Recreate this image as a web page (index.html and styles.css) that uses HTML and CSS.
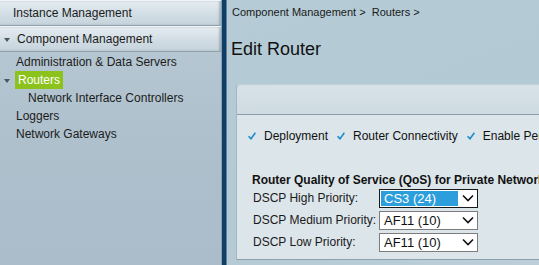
FILE: index.html
```html
<!DOCTYPE html>
<html lang="en">
<head>
  <meta charset="UTF-8" />
  <title>Edit Router</title>
  <link rel="stylesheet" href="styles.css">
</head>
<body>
  <div class="app">
    <aside class="sidebar">
      <div class="nav-bar">Instance Management</div>
      <div class="nav-bar open"><span class="caret"></span>Component Management</div>
      <ul class="nav-list">
        <li>Administration &amp; Data Servers</li>
        <li class="has-caret"><span class="caret"></span><span class="active">Routers</span></li>
        <li class="sub">Network Interface Controllers</li>
        <li>Loggers</li>
        <li>Network Gateways</li>
      </ul>
    </aside>
    <div class="divider"></div>

    <main class="content">
      <div class="breadcrumb">Component Management &gt;&nbsp; Routers &gt;</div>
      <h1>Edit Router</h1>

      <div class="panel">
        <div class="panel-head"></div>
        <div class="panel-body">
          <div class="steps">
            <span class="step"><svg class="tick" viewBox="0 0 8 8"><path d="M0.6 4.2 L3 6.8 L7.4 0.8" /></svg>Deployment</span>
            <span class="step"><svg class="tick" viewBox="0 0 8 8"><path d="M0.6 4.2 L3 6.8 L7.4 0.8" /></svg>Router Connectivity</span>
            <span class="step"><svg class="tick" viewBox="0 0 8 8"><path d="M0.6 4.2 L3 6.8 L7.4 0.8" /></svg>Enable Persistent</span>
          </div>

          <h2>Router Quality of Service (QoS) for Private Network</h2>
          <div class="form-row">
            <label>DSCP High Priority:</label>
            <div class="select focused"><span class="value">CS3 (24)</span><svg class="chev" viewBox="0 0 12 8"><path d="M1 1.5 L6 6.5 L11 1.5" /></svg></div>
          </div>
          <div class="form-row">
            <label>DSCP Medium Priority:</label>
            <div class="select"><span class="value">AF11 (10)</span><svg class="chev" viewBox="0 0 12 8"><path d="M1 1.5 L6 6.5 L11 1.5" /></svg></div>
          </div>
          <div class="form-row">
            <label>DSCP Low Priority:</label>
            <div class="select"><span class="value">AF11 (10)</span><svg class="chev" viewBox="0 0 12 8"><path d="M1 1.5 L6 6.5 L11 1.5" /></svg></div>
          </div>
        </div>
      </div>
    </main>
  </div>
</body>
</html>
```

FILE: styles.css
```css
* {
  margin: 0;
  padding: 0;
  box-sizing: border-box;
}

body {
  font-family: 'Liberation Sans', Arial, sans-serif;
  color: #111;
  width: 539px;
  height: 265px;
  overflow: hidden;
}

.app {
  display: flex;
  height: 265px;
}

/* left navigation */
.sidebar {
  width: 222px;
  flex-shrink: 0;
  background: linear-gradient(180deg, #b9cad5 0%, #adbfcb 60%, #abbdca 100%);
  border-right: 1px solid #8ea0ab;
}

.nav-bar {
  height: 26px;
  display: flex;
  align-items: center;
  padding-left: 13px;
  font-size: 12px;
  color: #1b1b1b;
  background: linear-gradient(180deg, #e6edf2 0%, #d3dee5 50%, #c6d4dd 100%);
  border-bottom: 1px solid #8fa2ae;
  border-top: 1px solid #f1f5f8;
  box-shadow: inset -2px 0 2px rgba(80, 100, 115, 0.35);
}

.nav-bar.open {
  padding-left: 4px;
}

.caret {
  display: inline-block;
  width: 0;
  height: 0;
  border-left: 3px solid transparent;
  border-right: 3px solid transparent;
  border-top: 4px solid #4a5761;
  margin-right: 7px;
  margin-top: 2px;
}

.nav-list {
  list-style: none;
  padding-top: 1px;
  font-size: 12px;
}

.nav-list li {
  height: 18px;
  line-height: 18px;
  padding-left: 16px;
  color: #1c1c1c;
}

.nav-list li.has-caret {
  padding-left: 4px;
  display: flex;
  align-items: center;
}

.nav-list li.has-caret .caret {
  margin-right: 5px;
}

.nav-list li.sub {
  padding-left: 28px;
}

.active {
  display: inline-block;
  background: #8cc21c;
  color: #fff;
  padding: 0 3px;
  height: 18px;
  line-height: 18px;
}

.divider {
  width: 5px;
  flex-shrink: 0;
  background: #0d3f68;
  border-right: 1px solid #5f819b;
}

/* main content */
.content {
  flex: 1;
  padding: 6px 0 0 5px;
  background: linear-gradient(160deg, #b5cbd6 0%, #b3c9d4 60%, #bccfd9 100%);
  overflow: hidden;
}

.breadcrumb {
  font-size: 11px;
  color: #1a1a1a;
  height: 16px;
}

h1 {
  font-size: 18px;
  font-weight: normal;
  color: #111;
  margin-top: 17px;
  margin-left: -1px;
}

.panel {
  margin-top: 24px;
  margin-left: 4px;
  width: 340px;
  border-left: 1px solid #a7b7c1;
  border-top: 1px solid #c2d0d8;
  border-bottom: 1px solid #8ea0ab;
  border-top-left-radius: 4px;
}

.panel-head {
  height: 30px;
  background: linear-gradient(180deg, #d7e2e8 0%, #cfdbe2 100%);
  border-bottom: 1px solid #8a9ea9;
  border-top-left-radius: 4px;
}

.panel-body {
  height: 144px;
  background: #dce5ea;
  padding: 13px 0 0 11px;
}

.steps {
  display: flex;
  font-size: 12px;
  white-space: nowrap;
  height: 16px;
  align-items: center;
}

.step {
  display: flex;
  align-items: center;
  margin-right: 9px;
}

.tick {
  width: 8px;
  height: 8px;
  margin-right: 8px;
  fill: none;
  stroke: #1b8ccc;
  stroke-width: 1.6;
}

h2 {
  font-size: 12px;
  font-weight: bold;
  white-space: nowrap;
  margin-top: 29px;
  margin-left: 4px;
  color: #111;
}

.form-row {
  display: flex;
  align-items: center;
  height: 22px;
  margin-left: 5px;
}

.form-row:first-of-type {
  margin-top: 1px;
}

.form-row label {
  width: 126px;
  font-size: 12px;
  color: #1a1a1a;
}

.select {
  width: 99px;
  height: 19px;
  border: 1px solid #7c7c7c;
  background: #fff;
  display: flex;
  align-items: center;
  padding: 1px;
  font-size: 13px;
}

.select.focused {
  border-color: #1a1a1a;
}

.select .value {
  flex: 1;
  height: 15px;
  line-height: 15px;
  padding-left: 3px;
}

.select.focused .value {
  background: #2c9edb;
  color: #fff;
}

.chev {
  width: 12px;
  height: 8px;
  margin: 0 2px 0 4px;
  fill: none;
  stroke: #111;
  stroke-width: 1.6;
}
```
